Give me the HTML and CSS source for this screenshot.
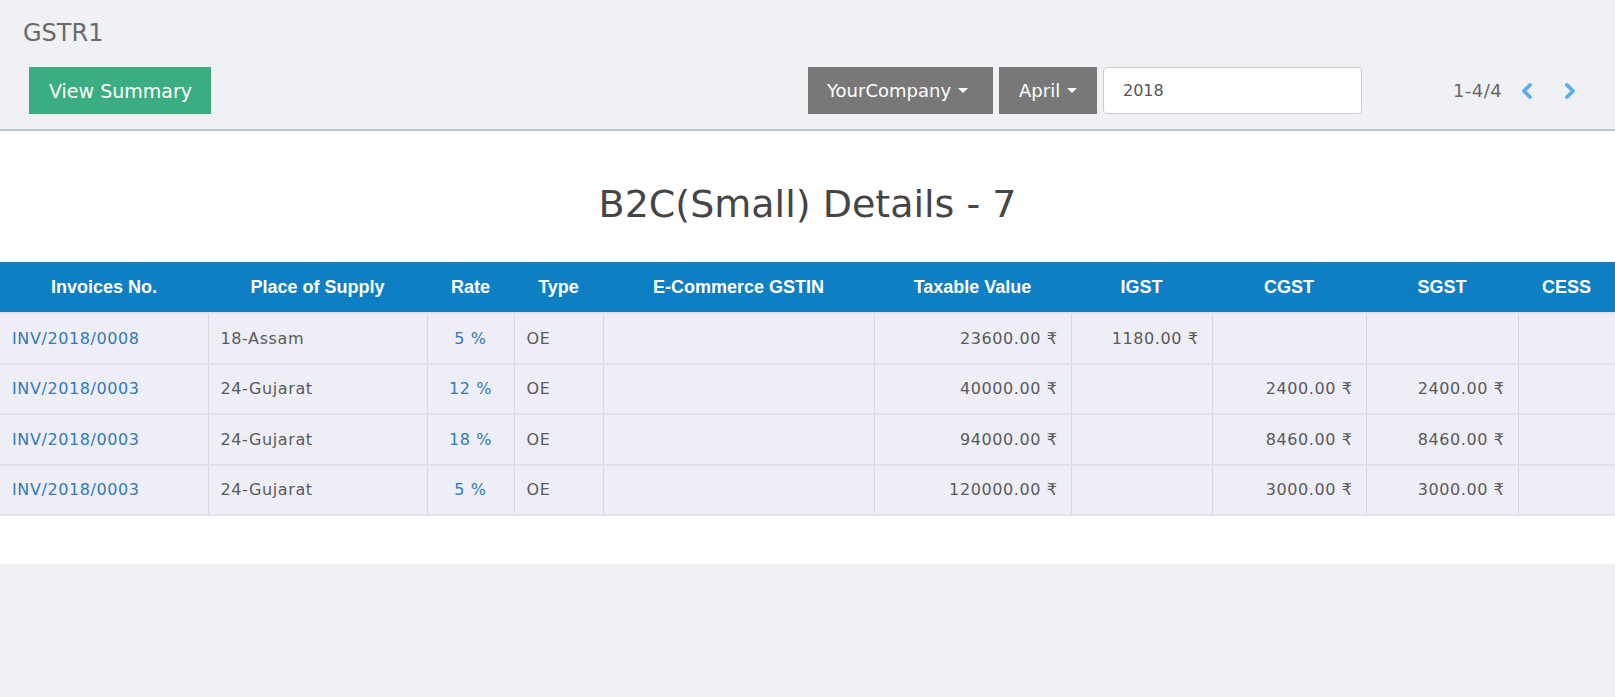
FILE: index.html
```html
<!DOCTYPE html>
<html lang="en">
<head>
<meta charset="utf-8">
<title>GSTR1</title>
<link rel="stylesheet" href="styles.css">
</head>
<body>
<header class="control-panel">
  <div class="breadcrumb">GSTR1</div>
  <div class="toolbar">
    <div class="toolbar-left">
      <button class="btn btn-primary">View Summary</button>
    </div>
    <div class="toolbar-right">
      <div class="filters">
        <button class="btn btn-dropdown btn-company">YourCompany <span class="caret"></span></button>
        <button class="btn btn-dropdown btn-month">April <span class="caret"></span></button>
        <div class="year-input">2018</div>
      </div>
      <div class="pager">
        <span class="pager-value">1-4/4</span>
        <svg class="chev" width="13" height="16" viewBox="0 0 13 16"><path d="M10 2 L4 8 L10 14" fill="none" stroke="#5aaeea" stroke-width="3.8" stroke-linecap="round" stroke-linejoin="round"/></svg>
        <svg class="chev" width="13" height="16" viewBox="0 0 13 16"><path d="M3 2 L9 8 L3 14" fill="none" stroke="#5aaeea" stroke-width="3.8" stroke-linecap="round" stroke-linejoin="round"/></svg>
      </div>
    </div>
  </div>
</header>
<main class="content">
  <h1 class="report-title">B2C(Small) Details - 7</h1>
  <table class="report">
    <colgroup>
      <col class="c-inv"><col class="c-place"><col class="c-rate"><col class="c-type"><col class="c-gstin"><col class="c-taxable"><col class="c-igst"><col class="c-cgst"><col class="c-sgst"><col class="c-cess">
    </colgroup>
    <thead>
      <tr>
        <th>Invoices No.</th><th>Place of Supply</th><th>Rate</th><th>Type</th><th>E-Commerce GSTIN</th><th>Taxable Value</th><th>IGST</th><th>CGST</th><th>SGST</th><th>CESS</th>
      </tr>
    </thead>
    <tbody>
      <tr>
        <td class="link">INV/2018/0008</td><td>18-Assam</td><td class="link center">5 %</td><td>OE</td><td></td><td class="num">23600.00 ₹</td><td class="num">1180.00 ₹</td><td></td><td></td><td></td>
      </tr>
      <tr>
        <td class="link">INV/2018/0003</td><td>24-Gujarat</td><td class="link center">12 %</td><td>OE</td><td></td><td class="num">40000.00 ₹</td><td></td><td class="num">2400.00 ₹</td><td class="num">2400.00 ₹</td><td></td>
      </tr>
      <tr>
        <td class="link">INV/2018/0003</td><td>24-Gujarat</td><td class="link center">18 %</td><td>OE</td><td></td><td class="num">94000.00 ₹</td><td></td><td class="num">8460.00 ₹</td><td class="num">8460.00 ₹</td><td></td>
      </tr>
      <tr>
        <td class="link">INV/2018/0003</td><td>24-Gujarat</td><td class="link center">5 %</td><td>OE</td><td></td><td class="num">120000.00 ₹</td><td></td><td class="num">3000.00 ₹</td><td class="num">3000.00 ₹</td><td></td>
      </tr>
    </tbody>
  </table>
</main>
</body>
</html>
```
FILE: styles.css
```css
* { box-sizing: border-box; }
html, body { margin: 0; padding: 0; }
body {
  background: #f0f1f5;
  font-family: "DejaVu Sans", "Open Sans", sans-serif;
  color: #555;
}
.control-panel {
  padding: 19px 0 15px 0;
  border-bottom: 2px solid #b9c4d4;
}
.breadcrumb {
  margin-left: 23px;
  font-size: 24px;
  line-height: 29px;
  color: #6b6b6b;
  height: 29px;
}
.toolbar {
  margin-top: 19px;
  display: grid;
  grid-template-columns: 808px 1fr;
  height: 47px;
}
.toolbar-left { padding-left: 29px; display: flex; }
.btn {
  border: none;
  font-family: inherit;
  font-size: 18px;
  color: #fff;
  height: 47px;
  margin: 0;
  cursor: pointer;
  display: flex;
  align-items: center;
}
.btn-primary {
  background: #3aae80;
  font-size: 19px;
  padding: 0 19px 0 20px;
}
.toolbar-right {
  display: flex;
  align-items: center;
}
.filters { display: flex; gap: 6px; }
.btn-dropdown {
  background: #787878;
  gap: 7px;
}
.btn-company { padding: 0 18px 0 19px; width: 185px; }
.btn-month { padding: 0 18px 0 20px; width: 98px; }
.caret {
  display: inline-block;
  width: 0;
  height: 0;
  border-top: 5px solid #fff;
  border-left: 5px solid transparent;
  border-right: 5px solid transparent;
}
.year-input {
  width: 259px;
  height: 47px;
  background: #fff;
  border: 1px solid #ccc;
  border-radius: 4px;
  padding-left: 19px;
  font-size: 16px;
  line-height: 45px;
  color: #555;
}
.pager {
  margin-left: auto;
  padding-right: 38px;
  display: flex;
  align-items: center;
}
.pager-value {
  font-size: 18px;
  color: #666;
  margin-right: 18px;
  letter-spacing: 0.4px;
}
.chev { display: block; }
.chev + .chev { margin-left: 31px; }
.content {
  background: #fff;
  padding: 50px 0 48px 0;
}
.report-title {
  margin: 0 0 35px 0;
  text-align: center;
  font-weight: normal;
  font-size: 38px;
  line-height: 46px;
  color: #454545;
}
.report {
  width: 100%;
  table-layout: fixed;
  border-collapse: collapse;
  font-size: 16px;
  letter-spacing: 0.6px;
}
.c-inv { width: 208px; }
.c-place { width: 219px; }
.c-rate { width: 87px; }
.c-type { width: 89px; }
.c-gstin { width: 271px; }
.c-taxable { width: 197px; }
.c-igst { width: 141px; }
.c-cgst { width: 154px; }
.c-sgst { width: 152px; }
.c-cess { width: 97px; }
.report th {
  background: #0f7fc4;
  color: #fff;
  font-family: "Liberation Sans", Arial, sans-serif;
  font-weight: bold;
  font-size: 18px;
  letter-spacing: 0;
  height: 51px;
  padding: 0 8px;
  text-align: center;
  white-space: nowrap;
}
.report td {
  background: #eeeef6;
  height: 50.5px;
  padding: 0 13px 0 12px;
  border-top: 2px solid #e2e2ea;
  border-bottom: 2px solid #e2e2ea;
  border-left: 1px solid #d8d8de;
  border-right: 1px solid #d8d8de;
  white-space: nowrap;
  color: #5a5a5a;
}
.report td:first-child { border-left: none; }
.report td:last-child { border-right: none; }
.report td.link { color: #337ab7; }
.report td.center { text-align: center; padding: 0; }
.report td.num { text-align: right; }
```
